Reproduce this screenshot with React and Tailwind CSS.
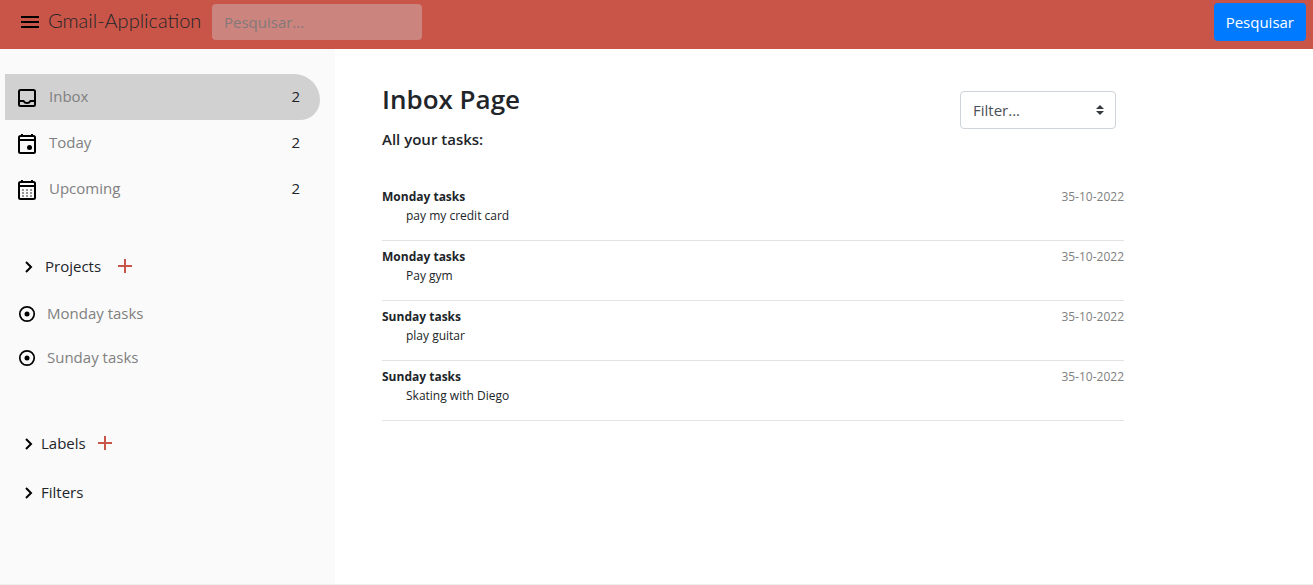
import { useState } from "react";

const folders = [
  { name: "Inbox", count: 2, icon: InboxIcon },
  { name: "Today", count: 2, icon: TodayIcon },
  { name: "Upcoming", count: 2, icon: UpcomingIcon },
];

const projects = ["Monday tasks", "Sunday tasks"];

const tasks = [
  { project: "Monday tasks", text: "pay my credit card", date: "35-10-2022" },
  { project: "Monday tasks", text: "Pay gym", date: "35-10-2022" },
  { project: "Sunday tasks", text: "play guitar", date: "35-10-2022" },
  { project: "Sunday tasks", text: "Skating with Diego", date: "35-10-2022" },
];

function Svg({ children }) {
  return (
    <svg className="size-6 shrink-0" viewBox="0 0 24 24" fill="none" stroke="#000" strokeWidth="2" aria-hidden="true">
      {children}
    </svg>
  );
}

function InboxIcon() {
  return (
    <Svg>
      <rect x="4" y="4" width="16" height="16" rx="1.500" />
      <path d="M4 15h4.500c.7 1.200 2 2 3.500 2s2.800-.8 3.500-2H20" />
    </Svg>
  );
}

function TodayIcon() {
  return (
    <Svg>
      <rect x="4" y="4" width="16" height="17" rx="1.500" />
      <path d="M4 8h16M7 2v3M17 2v3" />
      <circle cx="14.500" cy="15.500" r="2.500" fill="#000" stroke="none" />
    </Svg>
  );
}

function UpcomingIcon() {
  return (
    <Svg>
      <rect x="4" y="4" width="16" height="17" rx="1.500" />
      <path d="M4 8h16M7 2v3M17 2v3" />
      <path stroke="#777" strokeDasharray="2 2" d="M7 12h10M7 15h10M7 18h10" strokeWidth="1.600" />
    </Svg>
  );
}

function TargetIcon() {
  return (
    <Svg>
      <circle cx="12" cy="12" r="7.200" strokeWidth="1.700" />
      <circle cx="12" cy="12" r="2.500" fill="#000" stroke="none" />
    </Svg>
  );
}

function Chevron() {
  return (
    <svg className="mt-0.5 size-3 shrink-0" viewBox="0 0 12 12" fill="none" stroke="#000" strokeWidth="2" aria-hidden="true">
      <path d="M4 1l5 5-5 5" />
    </svg>
  );
}

function AddButton({ label }) {
  return (
    <button type="button" aria-label={label} className="cursor-pointer">
      <svg className="size-4" viewBox="0 0 16 16" stroke="#c95548" strokeWidth="2" aria-hidden="true">
        <path d="M8 1v14M1 8h14" />
      </svg>
    </button>
  );
}

export default function App() {
  const [current, setCurrent] = useState("Inbox");
  return (
    <div className="flex min-h-screen flex-col border-b border-[#eeeeee] bg-white font-['Open_Sans',sans-serif] text-[15px] leading-6 text-[#212529]">
      <header className="flex h-[49px] shrink-0 items-start bg-[#c95548] pt-[3px] pr-[7px] pl-[18px]">
        <button type="button" aria-label="Menu" className="mt-[7px] cursor-pointer">
          <Svg>
            <path d="M3 7h18M3 12h18M3 17h18" />
          </Svg>
        </button>
        <a href="#" className="ml-1.5 w-[164px] font-['Lato',cursive] text-[20px] leading-[34px] font-light whitespace-nowrap">
          Gmail-Application
        </a>
        <form className="flex flex-1 justify-between" onSubmit={(e) => e.preventDefault()}>
          <input
            type="search"
            aria-label="Pesquisar"
            placeholder="Pesquisar..."
            className="mt-px h-9 w-[210px] rounded bg-[#cb857e] px-3 placeholder:text-[#83797a]"
          />
          <button type="submit" className="h-[38px] cursor-pointer rounded bg-[#007bff] px-3 text-white">
            Pesquisar
          </button>
        </form>
      </header>

      <div className="flex flex-1">
        <aside className="w-[335px] shrink-0 bg-[#fafafa] pt-[25px]">
          <nav aria-label="Folders" className="pr-[15px] pl-[5px]">
            {folders.map(({ name, count, icon: Icon }) => (
              <a
                key={name}
                href="#"
                onClick={() => setCurrent(name)}
                className={`flex h-[46px] items-center rounded-tr-[26px] rounded-br-[20px] pr-5 pb-0.5 pl-2.5 ${current === name ? "bg-[#d1d1d1]" : ""}`}
              >
                <span className="mt-1">
                  <Icon />
                </span>
                <span className="ml-2.5 flex-1 text-[#808080]">{name}</span>
                <span>{count}</span>
              </a>
            ))}
          </nav>

          <section className="mt-[42px] pl-[15px]">
            <div className="flex items-center pl-[7px]">
              <Chevron />
              <h2 className="ml-[11px]">Projects</h2>
              <span className="ml-4 flex">
                <AddButton label="Add project" />
              </span>
            </div>
            <ul className="mt-[13px]">
              {projects.map((name) => (
                <li key={name}>
                  <a href="#" className="flex h-11 items-center gap-2 text-[#808080]">
                    <span className="mt-0.5">
                      <TargetIcon />
                    </span>
                    {name}
                  </a>
                </li>
              ))}
            </ul>
          </section>

          <section className="mt-[52px] flex items-center pl-[22px]">
            <Chevron />
            <h2 className="ml-[7px]">Labels</h2>
            <span className="ml-[11px] flex">
              <AddButton label="Add label" />
            </span>
          </section>
          <section className="mt-[25px] flex items-center pl-[22px]">
            <Chevron />
            <h2 className="ml-[7px]">Filters</h2>
          </section>
        </aside>

        <main className="ml-[47px] max-w-[742px] flex-1 pt-8">
          <div className="flex items-start justify-between pr-2">
            <div>
              <h1 className="text-[26px] leading-9 font-semibold">Inbox Page</h1>
              <p className="mt-3 text-[15px] leading-5 font-semibold">All your tasks:</p>
            </div>
            <div className="relative mt-2.5">
              <select
                aria-label="Filter"
                className="h-[38px] w-[156px] appearance-none rounded border border-[#ced4da] bg-white pr-7 pl-3 text-[#495057]"
              >
                <option>Filter...</option>
                {projects.map((name) => (
                  <option key={name}>{name}</option>
                ))}
              </select>
              <svg className="pointer-events-none absolute top-3.5 right-3 h-2.5 w-2" viewBox="0 0 4 5" fill="#343a40" aria-hidden="true">
                <path d="M2 0L0 2h4zm0 5L0 3h4z" />
              </svg>
            </div>
          </div>
          <ul className="mt-8 text-[12px] leading-[19px]">
            {tasks.map((task) => (
              <li key={task.text} className="flex h-[60px] justify-between border-b border-[#e3e3e3] pt-1.5">
                <div>
                  <h3 className="font-bold">{task.project}</h3>
                  <p className="pl-6">{task.text}</p>
                </div>
                <time className="text-[#808080]">{task.date}</time>
              </li>
            ))}
          </ul>
        </main>
      </div>
    </div>
  );
}
